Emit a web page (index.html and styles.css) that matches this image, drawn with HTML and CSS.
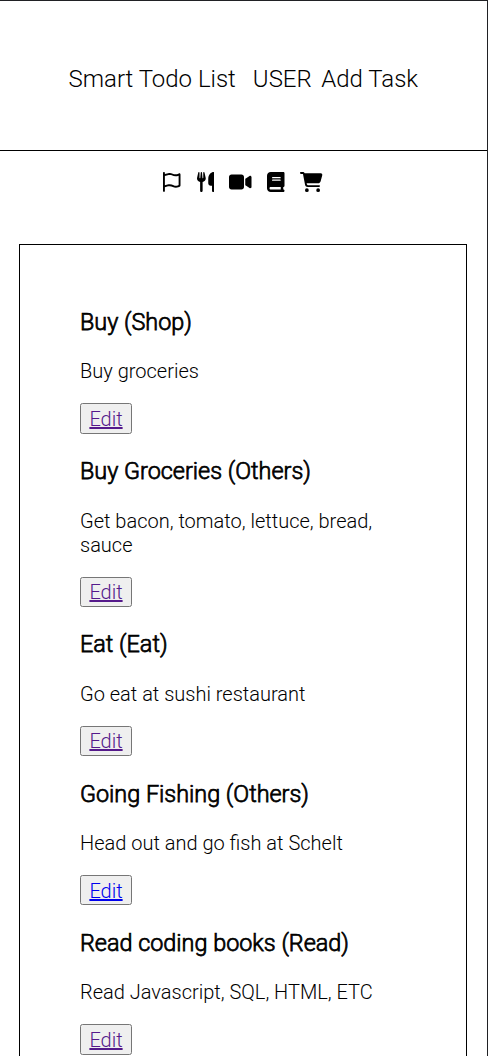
FILE: index.html
```html
<!DOCTYPE html>
<html lang="en">
<head>
<meta charset="utf-8">
<title>Smart Todo List</title>
<link rel="stylesheet" href="styles.css">
</head>
<body>
<header class="header">
  <span class="brand">Smart Todo List</span>
  <span class="user">USER</span>
  <span class="add">Add Task</span>
</header>
<nav class="filters">
  <svg class="flag" viewBox="0 0 512 512"><path d="M48 24C48 10.700 37.300 0 24 0S0 10.700 0 24V488c0 13.300 10.700 24 24 24s24-10.700 24-24V388l80.300-20.100c41.100-10.300 84.600-5.500 122.500 13.400c44.200 22.100 95.500 24.800 141.700 7.400l34.700-13c12.500-4.700 20.800-16.600 20.800-30V66.100c0-23-24.200-38-44.800-27.700l-9.600 4.800c-46.300 23.200-100.800 23.200-147.100 0c-35.100-17.600-75.400-22-113.500-12.500L48 52V24zm0 77.500l96.600-24.200c27-6.700 55.500-3.600 80.400 8.800c54.900 27.400 118.700 29.700 175 6.800V334.700l-24.400 9.100c-33.700 12.600-71.200 10.700-103.400-5.400c-48.200-24.100-103.300-30.100-155.600-17.100L48 338.500v-237z"/></svg>
  <svg class="food" viewBox="0 0 448 512"><path d="M416 0C400 0 288 32 288 176V288c0 35.300 28.700 64 64 64h32V480c0 17.700 14.300 32 32 32s32-14.300 32-32V352 240 32c0-17.700-14.300-32-32-32zM64 16C64 7.800 57.900 1 49.700 .1S34.200 4.600 32.400 12.500L2.100 148.800C.7 155.100 0 161.500 0 167.900c0 45.900 35.100 83.600 80 87.700V480c0 17.700 14.300 32 32 32s32-14.300 32-32V255.600c44.900-4.100 80-41.800 80-87.700c0-6.400-.7-12.800-2.100-19.100L191.600 12.500c-1.800-8-9.300-13.300-17.400-12.400S160 7.800 160 16V150.200c0 5.400-4.400 9.800-9.800 9.800c-5.100 0-9.300-3.900-9.800-9L127.900 14.600C127.200 6.300 120.300 0 112 0s-15.200 6.300-15.900 14.600L83.700 151c-.5 5.100-4.700 9-9.800 9c-5.400 0-9.800-4.400-9.800-9.800V16z"/></svg>
  <svg class="video" viewBox="0 0 576 512"><path d="M0 128C0 92.700 28.700 64 64 64H320c35.300 0 64 28.700 64 64V384c0 35.300-28.700 64-64 64H64c-35.300 0-64-28.700-64-64V128zM559.100 99.800c10.400 5.600 16.900 16.400 16.900 28.200V384c0 11.800-6.500 22.600-16.900 28.200s-23 5-32.900-1.600l-96-64L416 337.100V320 192 174.900l14.200-9.500 96-64c9.800-6.500 22.400-7.200 32.900-1.600z"/></svg>
  <svg class="book" viewBox="0 0 448 512"><path d="M96 0C43 0 0 43 0 96V416c0 53 43 96 96 96H384h32c17.700 0 32-14.300 32-32s-14.300-32-32-32V384c17.700 0 32-14.300 32-32V32c0-17.700-14.300-32-32-32H384 96zm0 384H352v64H96c-17.700 0-32-14.300-32-32s14.300-32 32-32zm32-240c0-8.800 7.200-16 16-16H336c8.800 0 16 7.200 16 16s-7.200 16-16 16H144c-8.800 0-16-7.200-16-16zm16 48H336c8.800 0 16 7.200 16 16s-7.200 16-16 16H144c-8.800 0-16-7.200-16-16s7.200-16 16-16z"/></svg>
  <svg class="cart" viewBox="0 0 576 512"><path d="M0 24C0 10.700 10.700 0 24 0H69.500c22 0 41.500 12.800 50.600 32h411c26.300 0 45.500 25 38.600 50.400l-41 152.300c-8.500 31.400-37 53.300-69.500 53.300H170.700l5.400 28.500c2.200 11.300 12.100 19.500 23.600 19.500H488c13.300 0 24 10.700 24 24s-10.700 24-24 24H199.700c-34.600 0-64.300-24.600-70.700-58.500L77.400 54.500c-.7-3.800-4-6.500-7.900-6.500H24C10.700 48 0 37.300 0 24zM128 464a48 48 0 1 1 96 0 48 48 0 1 1-96 0zm336-48a48 48 0 1 1 0 96 48 48 0 1 1 0-96z"/></svg>
</nav>
<main class="tasks">
  <article class="task"><h2>Buy (Shop)</h2><p>Buy groceries</p><button><a class="visited" href="#">Edit</a></button></article>
  <article class="task"><h2>Buy Groceries (Others)</h2><p>Get bacon, tomato, lettuce, bread, sauce</p><button><a class="visited" href="#">Edit</a></button></article>
  <article class="task"><h2>Eat (Eat)</h2><p>Go eat at sushi restaurant</p><button><a class="visited" href="#">Edit</a></button></article>
  <article class="task"><h2>Going Fishing (Others)</h2><p>Head out and go fish at Schelt</p><button><a class="fresh" href="#">Edit</a></button></article>
  <article class="task"><h2>Read coding books (Read)</h2><p>Read Javascript, SQL, HTML, ETC</p><button><a class="visited" href="#">Edit</a></button></article>
</main>
</body>
</html>
```
FILE: styles.css
```css
html {
  height: 100%;
  overflow: hidden;
}
body {
  margin: 0;
  height: 100%;
  box-sizing: border-box;
  display: flex;
  flex-direction: column;
  overflow: hidden;
  border-right: 1px solid #202124;
  font-family: Roboto, sans-serif;
  font-weight: 300;
  font-size: 20px;
  color: #000;
}
.header {
  box-sizing: border-box;
  flex: none;
  height: 151px;
  border-top: 1px solid #202124;
  border-bottom: 1px solid #000;
  display: flex;
  align-items: center;
  padding: 7px 0 0 68.500px;
  font-size: 24px;
  white-space: nowrap;
}
.user {
  margin-left: 17px;
}
.add {
  margin-left: 9.500px;
}
.filters {
  flex: none;
  display: flex;
  padding: 20.500px 0 0 163px;
  height: 72.500px;
}
.filters svg {
  height: 20px;
  fill: #000;
}
.flag { width: 20px; margin-right: 13.500px; }
.food { width: 17.500px; margin-right: 15px; }
.video { width: 22.500px; margin-right: 15.500px; }
.book { width: 17.500px; margin-right: 15.500px; }
.cart { width: 22.500px; }
.tasks {
  box-sizing: border-box;
  width: 448px;
  flex: 1;
  min-height: 0;
  overflow: hidden;
  margin-left: 19px;
  border: 1px solid #000;
  border-bottom: 0;
  padding: 62.850px 60px 0;
}
.task h2 {
  margin: 0 0 23.400px;
  font-size: 23.400px;
  line-height: 28px;
  font-weight: 300;
  -webkit-text-stroke: 0.75px #000;
}
.task p {
  margin: 0 0 20px;
  line-height: 24px;
}
.task button {
  display: block;
  box-sizing: border-box;
  margin: 0 0 23.500px;
  width: 52px;
  height: 30.400px;
  padding: 1px 0 0;
  border: 1px solid #767676;
  border-radius: 2.500px;
  background: #efefef;
  font: inherit;
}
.task a {
  text-decoration-thickness: 2px;
}
.task:last-child button {
  margin-bottom: 0;
}
.visited { color: #551a8b; }
.fresh { color: #0000ee; }
```
